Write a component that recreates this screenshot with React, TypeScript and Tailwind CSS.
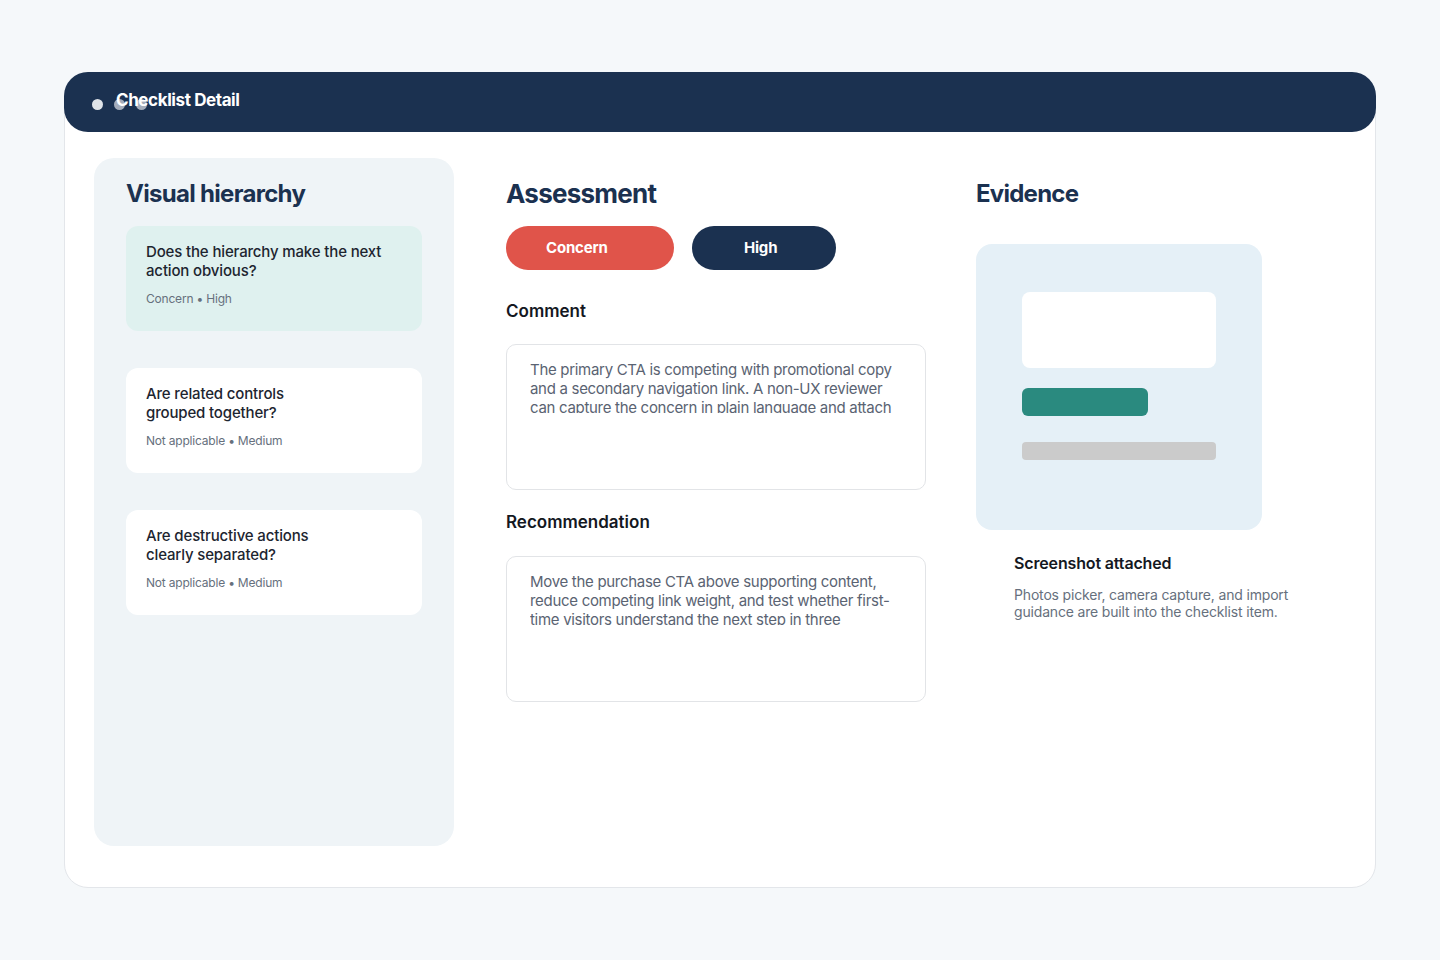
import React from "react";

const items = [
  { lines: ["Does the hierarchy make the next", "action obvious?"], meta: "Concern", level: "High", active: true },
  { lines: ["Are related controls", "grouped together?"], meta: "Not applicable", level: "Medium", active: false },
  { lines: ["Are destructive actions", "clearly separated?"], meta: "Not applicable", level: "Medium", active: false },
];

function TextBox({ text }: { text: string }) {
  return (
    <div className="h-[146px] w-[420px] rounded-[10px] border border-[#e2e4e7] bg-white pl-[23px] pr-[24px] pt-[15px]">
      <div className="h-[53px] overflow-hidden text-[15px] leading-[19px] tracking-[-0.3px] text-[#5a6372]">{text}</div>
    </div>
  );
}

export default function App() {
  return (
    <div className="min-h-[960px] w-full bg-[#f5f8fa] pt-[72px]" style={{ fontFamily: "Inter, 'Noto Sans', sans-serif" }}>
      <div className="mx-[64px] h-[816px] w-[1312px] rounded-[24px] border border-[#e3e6ea] bg-white">
        <div className="relative -mx-px -mt-px flex h-[60px] items-center rounded-[24px] bg-[#1b3150] pb-[2px] pl-[52px]">
          <span className="absolute left-[28px] top-[27px] h-[11px] w-[11px] rounded-full bg-[#dfe3e8]" />
          <span className="absolute left-[50px] top-[27px] h-[11px] w-[11px] rounded-full bg-[#dfe3e8] opacity-70" />
          <span className="absolute left-[72px] top-[27px] h-[11px] w-[11px] rounded-full bg-[#dfe3e8] opacity-70" />
          <span className="relative z-10 text-[17px] font-bold tracking-[-0.4px] text-white">Checklist Detail</span>
        </div>
        <div className="flex px-[29px] pt-[26px]">
          {/* Left panel */}
          <div className="flex h-[688px] w-[360px] flex-col rounded-[20px] bg-[#eff4f7] px-[32px] pt-[21px]">
            <h2 className="mb-[17px] text-[24px] font-bold leading-[30px] tracking-[-0.7px] text-[#1b3150]">Visual hierarchy</h2>
            <div className="flex flex-col gap-[37px]">
              {items.map((it, i) => (
                <div
                  key={i}
                  className={
                    "h-[105px] w-[296px] rounded-[12px] px-[20px] pt-[16px] " +
                    (it.active ? "bg-[#dff1ef]" : "bg-white")
                  }
                >
                  <div className="text-[15px] font-medium leading-[19px] tracking-[-0.15px] text-[#1d2530]">
                    {it.lines[0]}
                    <br />
                    {it.lines[1]}
                  </div>
                  <div className="mt-[11px] text-[12px] leading-[16px] tracking-[-0.2px] text-[#66707d]">
                    {it.meta} • {it.level}
                  </div>
                </div>
              ))}
            </div>
          </div>

          {/* Middle */}
          <div className="ml-[52px] flex w-[420px] flex-col pt-[21px]">
            <h2 className="mb-[17px] text-[26px] font-bold leading-[30px] tracking-[-0.75px] text-[#1b3150]">Assessment</h2>
            <div className="flex gap-[18px]">
              <button className="flex h-[44px] w-[168px] items-center rounded-full bg-[#e0544a] pl-[40px] text-[15px] font-bold tracking-[-0.2px] text-white">
                Concern
              </button>
              <button className="flex h-[44px] w-[144px] items-center rounded-full bg-[#1b3150] pl-[52px] text-[15px] font-bold tracking-[-0.2px] text-white">
                High
              </button>
            </div>
            <div className="mt-[29px] mb-[21px] text-[17px] font-semibold leading-[24px] text-[#14181f]">Comment</div>
            <TextBox text="The primary CTA is competing with promotional copy and a secondary navigation link. A non-UX reviewer can capture the concern in plain language and attach a screenshot without needing design vocabulary." />
            <div className="mt-[20px] mb-[22px] text-[17px] font-semibold leading-[24px] text-[#14181f]">Recommendation</div>
            <TextBox text="Move the purchase CTA above supporting content, reduce competing link weight, and test whether first-time visitors understand the next step in three seconds or less." />
          </div>

          {/* Right */}
          <div className="ml-[50px] flex flex-col pt-[21px]">
            <h2 className="mb-[35px] text-[24px] font-bold leading-[30px] tracking-[-0.75px] text-[#1b3150]">Evidence</h2>
            <div className="flex h-[286px] w-[286px] flex-col rounded-[16px] bg-[#e5f0f7] pl-[46px] pt-[48px]">
              <div className="h-[76px] w-[194px] rounded-[8px] bg-white" />
              <div className="mt-[20px] h-[28px] w-[126px] rounded-[6px] bg-[#2a8a7f]" />
              <div className="mt-[26px] h-[18px] w-[194px] rounded-[4px] bg-[#cbcbcb]" />
            </div>
            <div className="ml-[38px] mt-[21px] w-[300px]">
              <div className="text-[16px] font-semibold leading-[24px] tracking-[-0.15px] text-[#14181f]">Screenshot attached</div>
              <div className="mt-[11px] text-[14px] leading-[17px] tracking-[-0.17px] text-[#66707d]">
                Photos picker, camera capture, and import guidance are built into the checklist item.
              </div>
            </div>
          </div>
        </div>
      </div>
    </div>
  );
}
